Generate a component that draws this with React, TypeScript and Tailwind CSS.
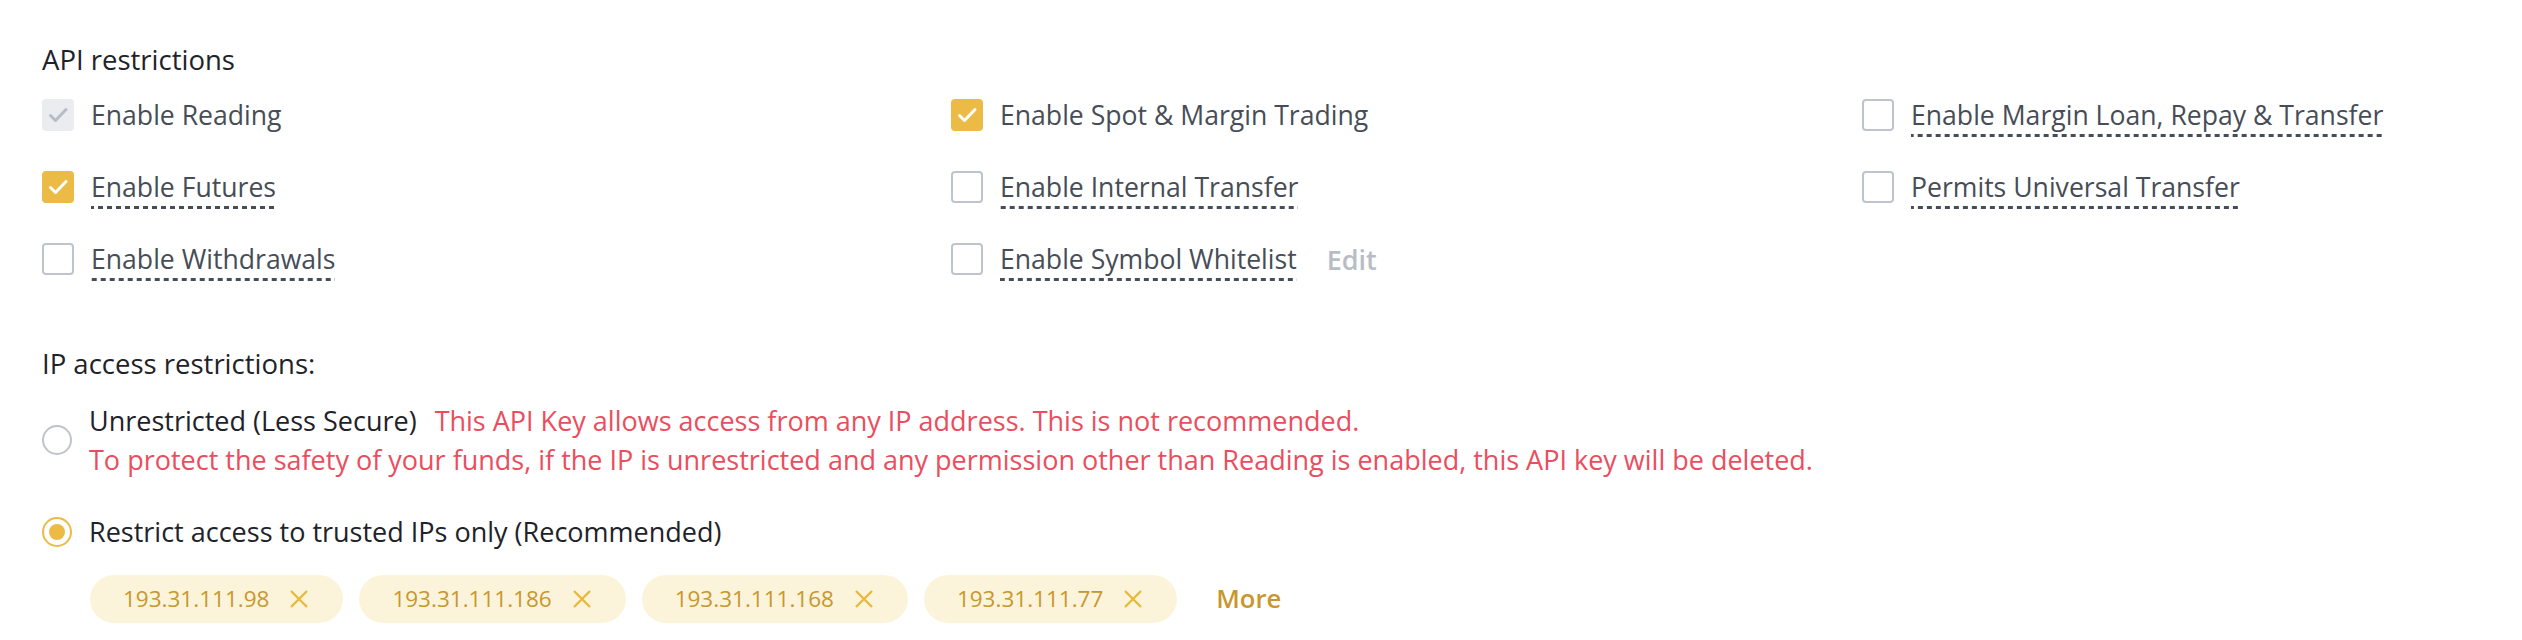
type Perm = {
  label: string
  state: 'disabled' | 'on' | 'off'
  tip?: boolean
  edit?: boolean
}

const perms: Perm[] = [
  { label: 'Enable Reading', state: 'disabled' },
  { label: 'Enable Spot & Margin Trading', state: 'on' },
  { label: 'Enable Margin Loan, Repay & Transfer', state: 'off', tip: true },
  { label: 'Enable Futures', state: 'on', tip: true },
  { label: 'Enable Internal Transfer', state: 'off', tip: true },
  { label: 'Permits Universal Transfer', state: 'off', tip: true },
  { label: 'Enable Withdrawals', state: 'off', tip: true },
  { label: 'Enable Symbol Whitelist', state: 'off', tip: true, edit: true },
]

const ips = ['193.31.111.98', '193.31.111.186', '193.31.111.168', '193.31.111.77']

function Checkbox({ state }: { state: Perm['state'] }) {
  if (state === 'off') {
    return <span className="h-[32px] w-[32px] shrink-0 rounded-[4px] border-2 border-[#bfc4cc] bg-white" />
  }
  const on = state === 'on'
  return (
    <span
      className={`flex h-[32px] w-[32px] shrink-0 items-center justify-center rounded-[4px] ${
        on ? 'bg-[#ebbb46]' : 'bg-[#eaecef]'
      }`}
    >
      <svg viewBox="0 0 32 32" className="h-[32px] w-[32px]" fill="none">
        <path
          d="M8.5 16.5l5 5L24 10.5"
          stroke={on ? '#ffffff' : '#b7bdc6'}
          strokeWidth="3"
          strokeLinecap="round"
          strokeLinejoin="round"
        />
      </svg>
    </span>
  )
}

function Radio({ checked }: { checked?: boolean }) {
  if (!checked) {
    return <span className="h-[30px] w-[30px] shrink-0 rounded-full border-2 border-[#bfc4cc] bg-white" />
  }
  return (
    <span className="flex h-[30px] w-[30px] shrink-0 items-center justify-center rounded-full border-2 border-[#ebbb46] bg-white">
      <span className="h-[16px] w-[16px] rounded-full bg-[#ebbb46]" />
    </span>
  )
}

function CloseIcon() {
  return (
    <svg viewBox="0 0 20 20" className="h-[20px] w-[20px] shrink-0" fill="none">
      <path d="M2 2l16 16M18 2L2 18" stroke="#e8b93f" strokeWidth="2.4" />
    </svg>
  )
}

export default function App() {
  return (
    <div className="min-h-[640px] w-full bg-white pl-[42px] pt-[42px] font-['Open_Sans',sans-serif] text-[#474d57]">
      {/* API restrictions */}
      <div className="text-[27.5px] leading-[36px] text-[#1e2329]">API restrictions</div>

      <div className="mt-[21px] grid grid-cols-[909px_911px_1fr] gap-y-[40px]">
        {perms.map((p) => (
          <div key={p.label} className="flex h-[32px] items-start gap-[17px]">
            <Checkbox state={p.state} />
            <span
              className={`text-[26.6px] leading-[32px] ${
                p.tip
                  ? 'bg-[linear-gradient(to_right,#474d57_5.5px,transparent_5.5px)] bg-[length:9px_3px] bg-bottom bg-repeat-x pb-[6px]'
                  : ''
              }`}
            >
              {p.label}
            </span>
            {p.edit && (
              <span className="ml-[13px] text-[27px] font-semibold leading-[34px] text-[#b7bdc6]">Edit</span>
            )}
          </div>
        ))}
      </div>

      {/* IP access restrictions */}
      <div className="mt-[71px] text-[27.5px] leading-[36px] text-[#1e2329]">IP access restrictions:</div>

      <div className="mt-[19px] flex items-center gap-[17px]">
        <Radio />
        <div className="text-[27px] leading-[39px]">
          <div>
            <span className="text-[#1e2329]">Unrestricted (Less Secure)</span>
            <span className="ml-[18px] text-[#ea4e5e]">
              This API Key allows access from any IP address. This is not recommended.
            </span>
          </div>
          <div className="text-[#ea4e5e]">
            To protect the safety of your funds, if the IP is unrestricted and any permission other than Reading is
            enabled, this API key will be deleted.
          </div>
        </div>
      </div>

      <div className="mt-[33px] flex items-center gap-[17px]">
        <Radio checked />
        <div className="text-[27px] leading-[39px] text-[#1e2329]">Restrict access to trusted IPs only (Recommended)</div>
      </div>

      <div className="mt-[24px] flex items-center gap-[16px] pl-[48px]">
        {ips.map((ip) => (
          <span
            key={ip}
            className="flex h-[48px] items-center gap-[20px] rounded-full bg-[#fcf4da] pl-[33px] pr-[34px] text-[22.5px] leading-[48px] text-[#c8972e]"
          >
            {ip}
            <CloseIcon />
          </span>
        ))}
        <span className="ml-[23px] text-[25.6px] font-semibold text-[#c8972e]">More</span>
      </div>
    </div>
  )
}
